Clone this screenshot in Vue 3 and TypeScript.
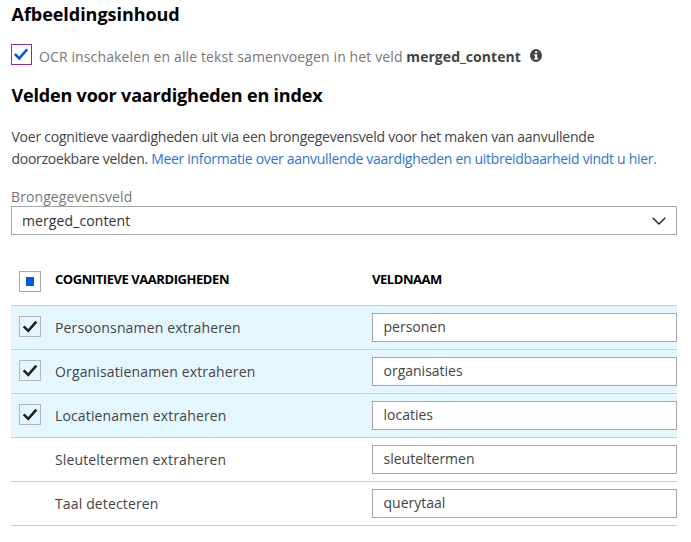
<script setup lang="ts">
import { reactive } from 'vue'

interface Skill {
  label: string
  field: string
  checked: boolean
  selectable: boolean
}

const skills = reactive<Skill[]>([
  { label: 'Persoonsnamen extraheren', field: 'personen', checked: true, selectable: true },
  { label: 'Organisatienamen extraheren', field: 'organisaties', checked: true, selectable: true },
  { label: 'Locatienamen extraheren', field: 'locaties', checked: true, selectable: true },
  { label: 'Sleuteltermen extraheren', field: 'sleuteltermen', checked: false, selectable: false },
  { label: 'Taal detecteren', field: 'querytaal', checked: false, selectable: false },
])
</script>

<template>
  <main class="panel">
    <h2 class="title title-image">Afbeeldingsinhoud</h2>

    <div class="ocr">
      <span class="check check-ocr">
        <svg viewBox="0 0 19 19" width="19" height="19">
          <path d="M2.9 9 7.2 13.3 15.2 4.3" fill="none" stroke="#015cda" stroke-width="2.6" />
        </svg>
      </span>
      <span class="ocr-text">OCR inschakelen en alle tekst samenvoegen in het veld <b>merged_content</b></span>
      <svg class="info" viewBox="0 0 12 13" width="12" height="13">
        <ellipse cx="6" cy="6.5" rx="6" ry="6.4" fill="#444" />
        <path d="M5 2.2h2.2v1.9H5zM4 5.2h3.2v4h1.1v1.2H3.9V9.2h1.2V6.4H4z" fill="#fff" />
      </svg>
    </div>

    <h2 class="title title-fields">Velden voor vaardigheden en index</h2>

    <p class="intro">
      <span class="intro-first">Voer cognitieve vaardigheden uit via een brongegevensveld voor het maken van aanvullende</span><br>
      doorzoekbare velden. <a class="link">Meer informatie over aanvullende vaardigheden en uitbreidbaarheid vindt u hier.</a>
    </p>

    <label class="source-label">Brongegevensveld</label>
    <div class="select">
      <span>merged_content</span>
      <svg viewBox="0 0 14 8" width="14" height="8">
        <path d="M.7.8 7 7 13.3.8" fill="none" stroke="#222" stroke-width="1.4" />
      </svg>
    </div>

    <section class="table">
      <header class="head">
        <span class="check check-mixed"><i class="mixed"></i></span>
        <span class="head-skill">COGNITIEVE VAARDIGHEDEN</span>
        <span class="head-field">VELDNAAM</span>
      </header>
      <div v-for="skill in skills" :key="skill.label" class="row" :class="{ selected: skill.checked }">
        <span v-if="skill.selectable" class="check check-row">
          <svg v-if="skill.checked" viewBox="0 0 20 19" width="20" height="19">
            <path d="M3.7 9.3 8.3 13.9 16.3 4.7" fill="none" stroke="#222" stroke-width="2.6" />
          </svg>
        </span>
        <span class="skill">{{ skill.label }}</span>
        <input v-model="skill.field" class="field" type="text">
      </div>
    </section>
  </main>
</template>

<style>
body {
  background: #fff;
}
</style>

<style scoped>
.panel {
  box-sizing: border-box;
  width: 691px;
  height: 542px;
  padding: 2px 14px 0 11px;
  overflow: hidden;
  font: 14px/22px "Open Sans", "Noto Sans", sans-serif;
  color: #444;
  white-space: nowrap;
}
.title {
  margin: 0;
  padding-left: 0.5px;
  font-size: 18px;
  font-weight: 700;
  line-height: 24px;
  color: #000;
}
.title-image {
  letter-spacing: -0.04px;
}
.title-fields {
  margin-top: 18px;
  letter-spacing: -0.18px;
}
.ocr {
  display: flex;
  align-items: flex-start;
  height: 21px;
  margin-top: 18px;
}
.check {
  display: flex;
  box-sizing: border-box;
  width: 22px;
  height: 21px;
  border: 1px solid #b5b5b5;
}
.check-ocr {
  width: 21px;
  border-color: #8a2da5;
}
.ocr-text {
  margin-left: 7px;
  padding-top: 2px;
  line-height: 21px;
  letter-spacing: 0.12px;
  color: #777;
}
.ocr-text b {
  font-weight: 700;
  letter-spacing: 0.05px;
  color: #444;
}
.info {
  margin: 5px 0 0 9px;
}
.intro {
  margin: 19px 0 0;
  padding-left: 0.5px;
  letter-spacing: -0.28px;
}
.intro-first {
  letter-spacing: -0.235px;
}
.link {
  letter-spacing: -0.31px;
  color: #2f73d9;
}
.source-label {
  display: block;
  margin-top: 17px;
  line-height: 19px;
  letter-spacing: 0.1px;
  color: #777;
}
.select {
  display: flex;
  box-sizing: border-box;
  align-items: center;
  justify-content: space-between;
  height: 29px;
  padding: 0 10px;
  border: 1px solid #a6a6a6;
  letter-spacing: 0.1px;
  color: #333;
}
.table {
  margin-top: 22px;
  border-bottom: 1px solid #ccc;
}
.head,
.row {
  display: grid;
  grid-template-columns: 44px 317px 305px;
}
.head {
  height: 48px;
  align-items: start;
  font-size: 13px;
  font-weight: 700;
  line-height: 20px;
  color: #000;
}
.check-mixed {
  align-items: center;
  justify-content: center;
  margin: 14px 0 0 8px;
  border-color: #a8a8a8;
}
.mixed {
  width: 8px;
  height: 9px;
  background: #015cda;
}
.head-skill,
.head-field {
  padding-top: 12px;
  letter-spacing: -0.44px;
}
.row {
  box-sizing: border-box;
  height: 44px;
  border-top: 1px solid #ccc;
}
.selected {
  background: #e5f7fe;
}
.check-row {
  margin: 10px 0 0 8px;
}
.skill {
  grid-column: 2;
  line-height: 43px;
  letter-spacing: 0.14px;
}
.field {
  box-sizing: border-box;
  grid-column: 3;
  height: 29px;
  margin: 7px 0 0;
  padding: 0 10.5px 2px;
  border: 1px solid #a6a6a6;
  border-radius: 0;
  outline: none;
  background: #fff;
  font: inherit;
  letter-spacing: 0;
  color: #444;
}
</style>
